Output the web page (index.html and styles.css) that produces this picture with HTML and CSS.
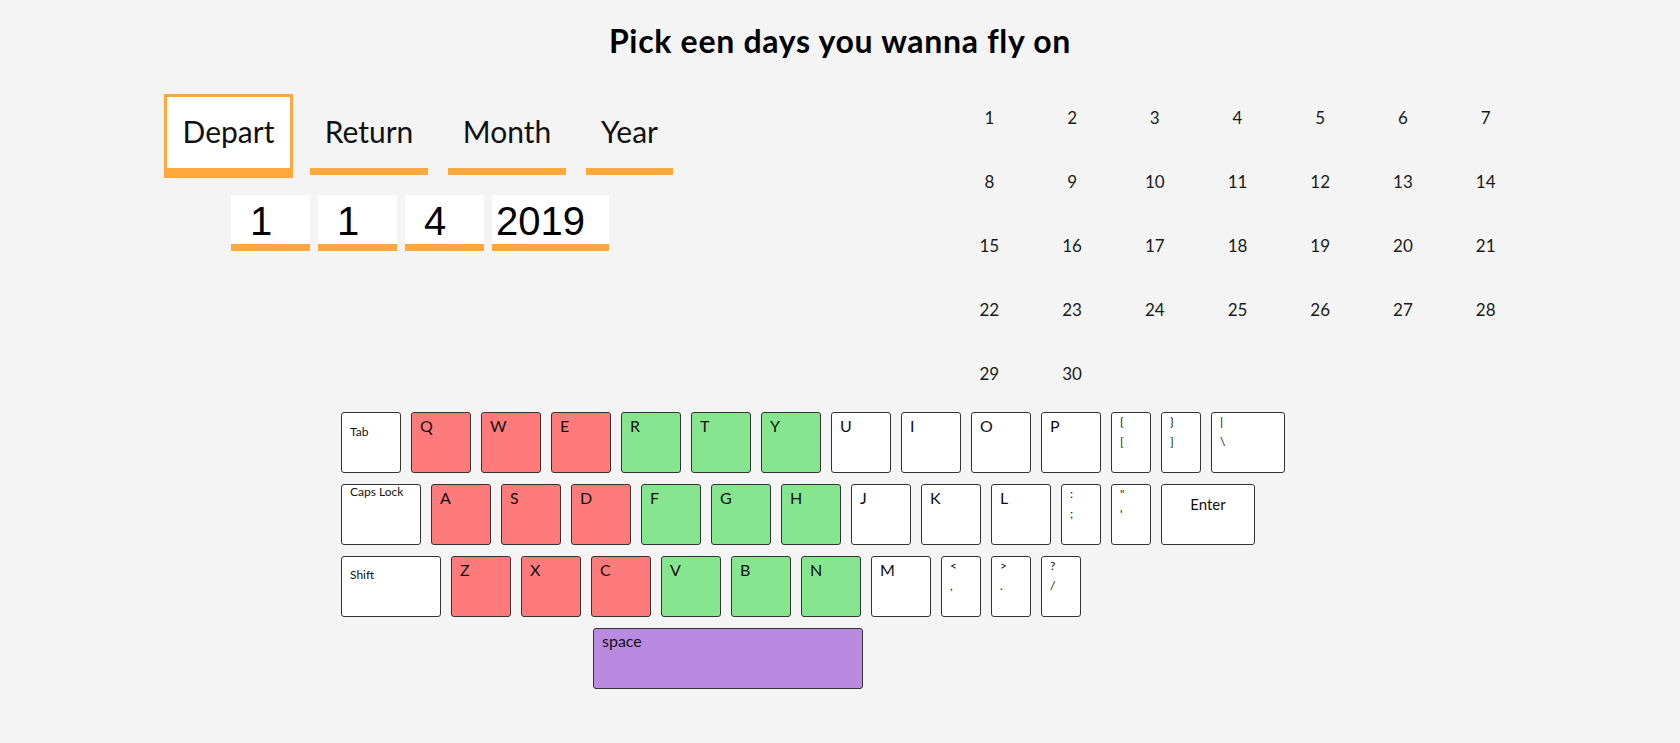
FILE: index.html
```html
<!DOCTYPE html>
<html lang="en">
<head>
<meta charset="utf-8">
<title>Pick een days</title>
<link rel="stylesheet" href="styles.css">
</head>
<body>
<h1 class="title">Pick een days you wanna fly on</h1>
<div class="top">
  <div class="picker">
    <div class="tabs">
      <div class="tab tab--depart is-active">Depart</div>
      <div class="tab tab--return">Return</div>
      <div class="tab tab--month">Month</div>
      <div class="tab tab--year">Year</div>
    </div>
    <div class="fields">
      <div class="field">1</div>
      <div class="field">1</div>
      <div class="field">4</div>
      <div class="field field--year">2019</div>
    </div>
  </div>
  <div class="calendar">
    <span class="day">1</span><span class="day">2</span><span class="day">3</span><span class="day">4</span><span class="day">5</span><span class="day">6</span><span class="day">7</span>
    <span class="day">8</span><span class="day">9</span><span class="day">10</span><span class="day">11</span><span class="day">12</span><span class="day">13</span><span class="day">14</span>
    <span class="day">15</span><span class="day">16</span><span class="day">17</span><span class="day">18</span><span class="day">19</span><span class="day">20</span><span class="day">21</span>
    <span class="day">22</span><span class="day">23</span><span class="day">24</span><span class="day">25</span><span class="day">26</span><span class="day">27</span><span class="day">28</span>
    <span class="day">29</span><span class="day">30</span>
  </div>
</div>
<div class="keyboard">
  <div class="krow">
    <div class="key key--mod key--tab">Tab</div>
    <div class="key key--red">Q</div>
    <div class="key key--red">W</div>
    <div class="key key--red">E</div>
    <div class="key key--green">R</div>
    <div class="key key--green">T</div>
    <div class="key key--green">Y</div>
    <div class="key">U</div>
    <div class="key">I</div>
    <div class="key">O</div>
    <div class="key">P</div>
    <div class="key key--sym"><span>{</span><span>[</span></div>
    <div class="key key--sym"><span>}</span><span>]</span></div>
    <div class="key key--sym key--bslash"><span>|</span><span>\</span></div>
  </div>
  <div class="krow">
    <div class="key key--mod key--caps">Caps Lock</div>
    <div class="key key--red">A</div>
    <div class="key key--red">S</div>
    <div class="key key--red">D</div>
    <div class="key key--green">F</div>
    <div class="key key--green">G</div>
    <div class="key key--green">H</div>
    <div class="key">J</div>
    <div class="key">K</div>
    <div class="key">L</div>
    <div class="key key--sym"><span>:</span><span>;</span></div>
    <div class="key key--sym"><span>"</span><span>'</span></div>
    <div class="key key--enter">Enter</div>
  </div>
  <div class="krow">
    <div class="key key--mod key--shift">Shift</div>
    <div class="key key--red">Z</div>
    <div class="key key--red">X</div>
    <div class="key key--red">C</div>
    <div class="key key--green">V</div>
    <div class="key key--green">B</div>
    <div class="key key--green">N</div>
    <div class="key">M</div>
    <div class="key key--sym"><span>&lt;</span><span>,</span></div>
    <div class="key key--sym"><span>&gt;</span><span>.</span></div>
    <div class="key key--sym"><span>?</span><span>/</span></div>
  </div>
  <div class="krow krow--space">
    <div class="key key--space">space</div>
  </div>
</div>
</body>
</html>
```
FILE: styles.css
```css
* { box-sizing: border-box; }

html, body {
  margin: 0;
  padding: 0;
}

body {
  background: #f4f4f4;
  font-family: Lato, "Open Sans", sans-serif;
  color: #111;
  width: 1680px;
  height: 743px;
  overflow: hidden;
}

.title {
  margin: 0;
  padding-top: 21px;
  font-size: 32px;
  line-height: 40px;
  font-weight: 700;
  letter-spacing: 0.7px;
  text-align: center;
  color: #000;
}

.top {
  display: grid;
  grid-template-columns: 781px 579px;
  padding-left: 167px;
  align-items: start;
}

.picker {
  margin-top: 36px;
}

.tabs {
  display: flex;
  gap: 20px;
}

.tab {
  height: 78px;
  padding: 16px 0 19px;
  font-size: 30px;
  line-height: 36px;
  text-align: center;
  border-bottom: 7px solid #ffa93c;
}

.tab.is-active {
  background: #fff;
  outline: 3px solid #ffa93c;
}

.tab--depart { width: 123px; }
.tab--return { width: 118px; }
.tab--month { width: 118px; }
.tab--year { width: 87px; }

.fields {
  display: flex;
  gap: 8px;
  margin-top: 20px;
  margin-left: 64px;
}

.field {
  width: 79px;
  height: 56px;
  padding: 3px 0 0 19px;
  background: #fff;
  border-bottom: 7px solid #ffa93c;
  font-family: "Liberation Sans", Arial, sans-serif;
  font-size: 40px;
  line-height: 46px;
  color: #000;
}

.field--year {
  width: 117px;
  padding-left: 4px;
}

.calendar {
  margin-top: 25px;
  display: grid;
  grid-template-columns: repeat(7, 1fr);
  grid-auto-rows: 64px;
}

.day {
  text-align: center;
  font-size: 17px;
  line-height: 64px;
  color: #1a1a1a;
}

.keyboard {
  margin-top: 6px;
  padding-left: 341px;
  display: flex;
  flex-direction: column;
  gap: 11px;
}

.krow {
  display: flex;
  gap: 10px;
}

.krow--space {
  padding-left: 252px;
}

.key {
  width: 60px;
  height: 61px;
  padding: 3px 0 0 8px;
  background: #fff;
  border: 1px solid #333;
  border-radius: 3px;
  font-size: 16px;
  line-height: 20px;
  color: #111;
}

.key--red { background: #ff7b7b; }
.key--green { background: #86e58f; }

.key--mod {
  font-size: 12px;
  line-height: 16px;
}

.key--tab { padding-top: 11px; }

.key--caps {
  width: 80px;
  padding-top: 0;
  line-height: 14px;
}

.key--shift {
  width: 100px;
  padding-top: 10px;
}

.key--sym {
  width: 40px;
  display: flex;
  flex-direction: column;
  gap: 6px;
  padding-top: 2px;
  font-size: 12px;
  line-height: 14px;
}

.key--bslash { width: 74px; }

.key--enter {
  width: 94px;
  padding: 9px 0 0;
  text-align: center;
  font-size: 15px;
}

.key--space {
  width: 270px;
  padding-top: 2px;
  background: #b98be0;
}
```
